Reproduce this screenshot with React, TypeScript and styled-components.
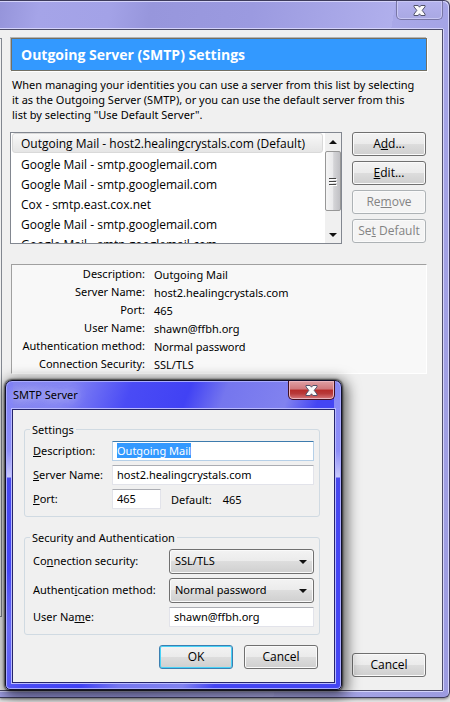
import React, { useEffect, useRef } from "react";
import styled, { createGlobalStyle, css } from "styled-components";

const GlobalStyle = createGlobalStyle`
  * { box-sizing: border-box; }
  body {
    margin: 0;
    background: #e4e4e4;
    color: #000;
    font: 11px/15px "Noto Sans", "Open Sans", sans-serif;
  }
  input, button, select { font: inherit; color: inherit; }
`;

const Page = styled.div`
  display: flex;
  flex-direction: column;
  min-height: 100vh;
  padding-bottom: 4px;
`;

const MainWindow = styled.main`
  position: relative;
  flex: 1;
  display: flex;
  flex-direction: column;
  padding: 0 6px 6px 0;
  border: 1px solid #3d3b5c;
  border-left: 0;
  border-radius: 0 6px 6px 0;
  background: linear-gradient(100deg, #9594da 0, #a5a4e8 40px, #a3a2e7 110px, #9796dc 150px, #9b9ae0 250px, #b0afec 390px, #a9a8e8 60%, #9c9be0 100%);
  box-shadow: inset -1px 1px 0 #d4d3fa, 0 1px 3px #777;
`;

const TitleBar = styled.header`
  display: flex;
  justify-content: flex-end;
  height: 28px;
`;

const CloseButton = styled.button<{ $danger?: boolean }>`
  display: grid;
  place-items: center;
  width: 47px;
  height: 19px;
  padding: 0;
  border: 1px solid #7876a5;
  border-top: 0;
  border-radius: 0 0 5px 5px;
  background: linear-gradient(#b4b2ee, #a9a8e3);
  box-shadow: inset 0 0 0 1px #c9c8f4;
  ${(p) =>
    p.$danger &&
    css`
      border-color: #3f1022;
      background: linear-gradient(#dfa0a5 0, #cf777b 45%, #b62c2a 50%, #b83a3a 70%, #d6797d 100%);
      box-shadow: inset 0 0 0 1px #eab4bd;
    `}
`;

const Client = styled.div`
  flex: 1;
  display: flex;
  border: 1px solid #4c4b68;
  border-left: 0;
  background: #f0f0f0;
  box-shadow: 1px 0 0 #d4d3fa, 0 -1px 0 #d4d3fa, 0 1px 0 #d4d3fa;
`;

const TreeEdge = styled.div`
  width: 2px;
  margin: 8px 8px 73px 0;
  border: 1px solid #828790;
  border-left: 0;
`;

const Content = styled.div`
  flex: 1;
  min-width: 0;
  display: flex;
  flex-direction: column;
  padding: 8px 16px 13px 0;
`;

const Heading = styled.h1`
  margin: 0 -1px 0 1px;
  padding: 7px 9px;
  border: 1px solid #716f64;
  background: #3399ff;
  box-shadow: 1px 1px 0 #fff, -1px -1px 0 #b4b4b4;
  color: #fff;
  font-family: "Open Sans", "Noto Sans", sans-serif;
  font-size: 14px;
  line-height: 17px;
  font-weight: 700;
`;

const Intro = styled.p`
  margin: 6px -10px 10px 2px;
`;

const ServerRow = styled.div`
  display: flex;
  gap: 10px;
  height: 112px;
`;

const ListBox = styled.div`
  flex: 1;
  min-width: 0;
  display: flex;
  border: 1px solid #828790;
  background: #fff;
`;

const List = styled.ul`
  flex: 1;
  margin: 0;
  padding: 0 2px 0 1px;
  overflow: hidden;
  list-style: none;
  font-family: "Open Sans", "Noto Sans", sans-serif;
  font-size: 12px;
  white-space: nowrap;
`;

const Item = styled.li<{ $selected?: boolean }>`
  height: 20px;
  padding: 2px 8px;
  border: 1px solid transparent;
  ${(p) =>
    p.$selected &&
    css`
      margin-bottom: 1px;
      border-color: #d9d9d9;
      border-radius: 3px;
      background: linear-gradient(#f8f8f8, #e5e5e5);
    `}
`;

const ScrollBar = styled.div`
  width: 16px;
  display: grid;
  grid-template-rows: 18px 60px 1fr;
  background: #f0f0f0;
  svg { place-self: center; }
`;

const Lower = styled.div`
  display: flex;
  flex-direction: column;
  justify-content: flex-end;
  align-items: center;
  padding-bottom: 6px;
`;

const Thumb = styled.div`
  display: grid;
  border: 1px solid #979797;
  border-radius: 2px;
  background: linear-gradient(90deg, #f5f5f5 0, #e9e9eb 48%, #d4d4d7 55%, #c0c0c4 100%);
`;

const Actions = styled.div`
  display: flex;
  flex-direction: column;
  gap: 5px;
`;

const Button = styled.button<{ $primary?: boolean }>`
  width: 74px;
  height: 24px;
  padding: 0 0 2px;
  border: 1px solid #707070;
  border-radius: 3px;
  background: linear-gradient(#f3f3f3 0, #ebebeb 48%, #dddddd 50%, #cfcfcf 100%);
  box-shadow: inset 0 0 0 1px #fafafa;
  font-family: "Open Sans", "Noto Sans", sans-serif;
  font-size: 12px;
  ${(p) =>
    p.$primary &&
    css`
      border-color: #3c7fb1;
      box-shadow: inset 0 0 0 1px #48d2f7;
    `}
  &:disabled {
    border-color: #adb2b5;
    background: #f4f4f4;
    color: #838383;
  }
`;

const Details = styled.dl`
  display: grid;
  grid-template-columns: 133px 1fr;
  grid-auto-rows: 18px;
  column-gap: 9px;
  margin: 20px -1px 0 1px;
  border: 1px solid #a0a0a0;
  border-right-color: #fff;
  border-bottom-color: #fff;
  background: #f8f8f8;
  white-space: nowrap;
`;

const Term = styled.dt`
  justify-self: end;
  padding-top: 1px;
`;

const Value = styled.dd`
  margin: 0;
  padding-top: 2px;
`;

const Footer = styled.footer`
  display: flex;
  justify-content: flex-end;
  margin-top: auto;
`;

const Dialog = styled.section`
  position: absolute;
  left: 5px;
  top: 379px;
  width: 337px;
  padding: 0 6px 6px;
  border: 1px solid #10102c;
  border-radius: 7px 7px 5px 5px;
  background:
    linear-gradient(#7f80f5 0, #8d8ef8 70px, #c8c9fb 96px, #4748ee 97px, #4445f5 190px, transparent 250px) left / 7px 100% no-repeat,
    linear-gradient(#8788f5 0, #8d8ef8 70px, #c8c9fb 96px, #4748ee 97px, #4445f5 190px, transparent 250px) right / 7px 100% no-repeat,
    linear-gradient(110deg, #8586ee 0, #8485f3 60px, #4a4bf5 120px, #4142f4 175px, #7576ee 210px, #8182ef 270px, #4445f3 300px);
  box-shadow: inset 0 0 0 1px #a9aaff, 0 0 2px 1px rgba(0, 0, 0, 0.65), 2px 3px 14px 3px rgba(0, 0, 0, 0.6);
`;

const DialogBar = styled.header`
  display: flex;
  justify-content: space-between;
  height: 28px;
`;

const DialogTitle = styled.h2`
  margin: 0;
  padding: 6px 1px;
  font-size: 11px;
  line-height: 15px;
  font-weight: 400;
  text-shadow: 0 0 8px #c9c9ff, 0 0 12px #c9c9ff;
`;

const DialogBody = styled.form`
  display: flex;
  flex-direction: column;
  gap: 13px;
  padding: 12px 14px 13px 11px;
  border: 1px solid #25256b;
  background: #f0f0f0;
  box-shadow: 0 0 0 1px #b9baff;
`;

const Group = styled.fieldset`
  min-width: 0;
  margin: 0;
  padding: 4px 5px 7px 8px;
  border: 1px solid #d0dae2;
  border-radius: 3px;
`;

const Legend = styled.legend`
  margin-left: -3px;
  padding: 0 2px;
`;

const Fields = styled.div<{ $label: number; $gap: number }>`
  display: grid;
  grid-template-columns: ${(p) => p.$label}px 1fr;
  align-items: center;
  row-gap: ${(p) => p.$gap}px;
  white-space: nowrap;
  label { padding-bottom: 2px; }
`;

const TextBox = styled.input<{ $short?: boolean }>`
  width: ${(p) => (p.$short ? "49px" : "100%")};
  min-width: 0;
  height: 20px;
  padding: 1px 4px 2px;
  border: 1px solid #e2e3ea;
  border-top-color: #abadb3;
  border-radius: 1px;
  background: #fff;
  outline: 0;
  line-height: 15px;
  &:focus {
    border-color: #b5cfe7;
    border-top-color: #3d7bad;
  }
  &::selection { background: #3399ff; color: #fff; }
`;

const PortRow = styled.div`
  display: flex;
  align-items: center;
`;

const DefaultLabel = styled.span`
  margin: 0 11px 0 10px;
`;

const SelectBox = styled.div`
  display: grid;
  align-items: center;
  > * { grid-area: 1 / 1; }
  svg {
    justify-self: end;
    margin-right: 7px;
    pointer-events: none;
  }
`;

const Select = styled.select`
  appearance: none;
  width: 100%;
  height: 25px;
  padding: 0 5px 2px;
  border: 1px solid #707070;
  border-radius: 3px;
  background: linear-gradient(#f3f3f3 0, #ebebeb 48%, #dddddd 50%, #cfcfcf 100%);
  box-shadow: inset 0 0 0 1px #fafafa;
`;

const Buttons = styled.div`
  display: flex;
  justify-content: flex-end;
  gap: 11px;
  margin-top: -3px;
  padding-right: 2px;
`;

const CloseGlyph = () => (
  <svg width="13" height="11" viewBox="0 0 13 11" aria-hidden="true">
    <path
      d="M1 .5h4.2l1.3 1.7L7.8.5H12v1.3L9.2 5.4 12 9.1v1.4H7.8L6.5 8.8l-1.3 1.7H1V9.1l2.8-3.7L1 1.8z"
      fill="#fafafa"
      stroke="#52536b"
    />
  </svg>
);

const Triangle = ({ up }: { up?: boolean }) => (
  <svg width="8" height="4" viewBox="0 0 8 4" aria-hidden="true">
    <path d={up ? "M0 4 4 0l4 4z" : "M0 0h8L4 4z"} fill="#111" />
  </svg>
);

const Grip = () => (
  <svg width="8" height="9" viewBox="0 0 8 9" aria-hidden="true">
    <path d="M0 1.5h7M0 4.5h7M0 7.5h7" stroke="#444" />
    <path d="M1 2.5h7M1 5.5h7M1 8.5h7" stroke="#fff" />
  </svg>
);

const servers = [
  "Outgoing Mail - host2.healingcrystals.com (Default)",
  "Google Mail - smtp.googlemail.com",
  "Google Mail - smtp.googlemail.com",
  "Cox - smtp.east.cox.net",
  "Google Mail - smtp.googlemail.com",
  "Google Mail - smtp.googlemail.com",
];

const details = [
  ["Description:", "Outgoing Mail"],
  ["Server Name:", "host2.healingcrystals.com"],
  ["Port:", "465"],
  ["User Name:", "shawn@ffbh.org"],
  ["Authentication method:", "Normal password"],
  ["Connection Security:", "SSL/TLS"],
];

function ServerDialog() {
  const description = useRef<HTMLInputElement>(null);
  useEffect(() => {
    description.current?.focus();
    description.current?.select();
  }, []);

  return (
    <Dialog role="dialog" aria-labelledby="dialog-title">
      <DialogBar>
        <DialogTitle id="dialog-title">SMTP Server</DialogTitle>
        <CloseButton $danger type="button" aria-label="Close dialog">
          <CloseGlyph />
        </CloseButton>
      </DialogBar>
      <DialogBody onSubmit={(e) => e.preventDefault()}>
        <Group>
          <Legend>Settings</Legend>
          <Fields $label={79} $gap={4}>
            <label htmlFor="description"><u>D</u>escription:</label>
            <TextBox id="description" ref={description} defaultValue="Outgoing Mail" />
            <label htmlFor="server"><u>S</u>erver Name:</label>
            <TextBox id="server" defaultValue="host2.healingcrystals.com" />
            <label htmlFor="port"><u>P</u>ort:</label>
            <PortRow>
              <TextBox $short id="port" defaultValue="465" />
              <DefaultLabel>Default:</DefaultLabel>
              <span>465</span>
            </PortRow>
          </Fields>
        </Group>
        <Group>
          <Legend>Security and Authentication</Legend>
          <Fields $label={136} $gap={4}>
            <label htmlFor="security">Co<u>n</u>nection security:</label>
            <SelectBox>
              <Select id="security"><option>SSL/TLS</option></Select>
              <Triangle />
            </SelectBox>
            <label htmlFor="auth">Authent<u>i</u>cation method:</label>
            <SelectBox>
              <Select id="auth"><option>Normal password</option></Select>
              <Triangle />
            </SelectBox>
            <label htmlFor="user">User Na<u>m</u>e:</label>
            <TextBox id="user" defaultValue="shawn@ffbh.org" />
          </Fields>
        </Group>
        <Buttons>
          <Button $primary type="submit">OK</Button>
          <Button type="button">Cancel</Button>
        </Buttons>
      </DialogBody>
    </Dialog>
  );
}

export default function App() {
  return (
    <Page>
      <GlobalStyle />
      <MainWindow>
        <TitleBar>
          <CloseButton type="button" aria-label="Close window">
            <CloseGlyph />
          </CloseButton>
        </TitleBar>
        <Client>
          <TreeEdge />
          <Content>
            <Heading>Outgoing Server (SMTP) Settings</Heading>
            <Intro>
              When managing your identities you can use a server from this list by selecting
              <br />
              it as the Outgoing Server (SMTP), or you can use the default server from this
              <br />
              list by selecting "Use Default Server".
            </Intro>
            <ServerRow>
              <ListBox>
                <List role="listbox" aria-label="Outgoing servers">
                  {servers.map((name, i) => (
                    <Item key={i} role="option" aria-selected={i === 0} $selected={i === 0}>
                      {name}
                    </Item>
                  ))}
                </List>
                <ScrollBar>
                  <Triangle up />
                  <Thumb><Grip /></Thumb>
                  <Lower><Triangle /></Lower>
                </ScrollBar>
              </ListBox>
              <Actions>
                <Button type="button">A<u>d</u>d...</Button>
                <Button type="button"><u>E</u>dit...</Button>
                <Button type="button" disabled>Re<u>m</u>ove</Button>
                <Button type="button" disabled>Se<u>t</u> Default</Button>
              </Actions>
            </ServerRow>
            <Details>
              {details.map(([term, value]) => (
                <React.Fragment key={term}>
                  <Term>{term}</Term>
                  <Value>{value}</Value>
                </React.Fragment>
              ))}
            </Details>
            <Footer>
              <Button type="button">Cancel</Button>
            </Footer>
          </Content>
        </Client>
        <ServerDialog />
      </MainWindow>
    </Page>
  );
}
